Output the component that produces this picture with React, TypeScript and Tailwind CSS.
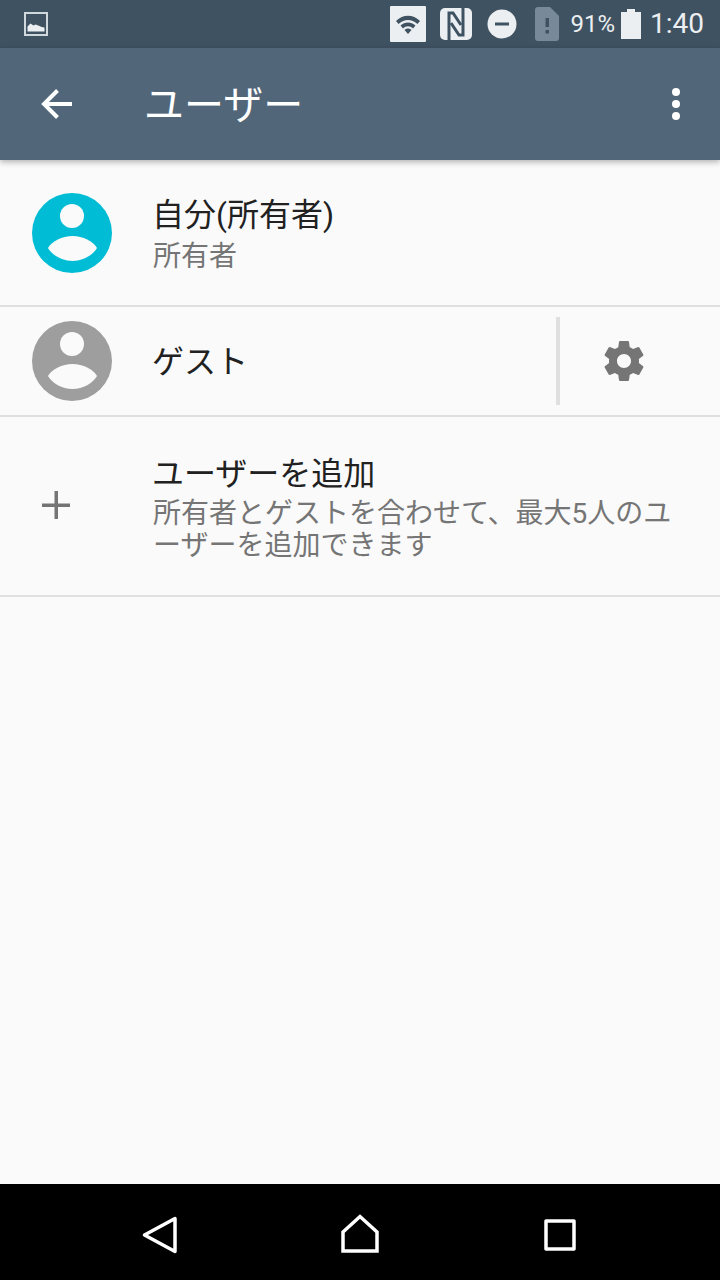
import React from "react";

const cjk = "font-['Roboto','Noto_Sans_CJK_JP',sans-serif]";

function Avatar({ color }: { color: string }) {
  return (
    <svg width="80" height="80" viewBox="0 0 80 80" className="shrink-0">
      <circle cx="40" cy="40" r="40" fill={color} />
      <circle cx="40" cy="23" r="12" fill="#fafafa" />
      <path d="M16 55 C20 48 30 43 40.500 43 C51 43 61 48 65 55 C61 62 51 68 40.500 68 C30 68 20 62 16 55 Z" fill="#fafafa" />
    </svg>
  );
}

function Divider() {
  return <div className="h-[2px] bg-[#e0e0e0]" />;
}

function StatusBar() {
  return (
    <div className="flex h-12 items-center bg-[#3f5262] pl-6 pr-4 text-[#eceff1]">
      <svg width="24" height="24" viewBox="0 0 24 24">
        <rect x="1" y="1" width="22" height="22" fill="none" stroke="#cfd8dc" strokeWidth="2" />
        <path d="M3.500 19.500v-5l3-3 3 2 2-1 4 1.500 2 1 3 .5v4z" fill="#eceff1" />
      </svg>
      <div className="ml-auto flex items-center">
        <svg width="36" height="36" viewBox="0 0 36 36">
          <rect width="36" height="36" rx="1" fill="#eceff1" />
          <path d="M6 15 C13 8 23 8 30 15 L27.500 18 C21.500 12.500 14.500 12.500 8.500 18 Z" fill="#3f5262" />
          <path d="M10.500 19.500 C15 15.500 21 15.500 25.500 19.500 L23 22.500 C20 19.500 16 19.500 13 22.500 Z" fill="#3f5262" />
          <path d="M14.500 24 C16.500 22 19.500 22 21.500 24 L18 28 Z" fill="#3f5262" />
        </svg>
        <svg width="32" height="32" viewBox="0 0 32 32" className="ml-[14px]">
          <rect width="32" height="32" rx="5" fill="#eceff1" />
          <path d="M9 32V5H13L21 17" fill="none" stroke="#3f5262" strokeWidth="3" />
          <path d="M23 0V27H19L11 15" fill="none" stroke="#3f5262" strokeWidth="3" />
        </svg>
        <svg width="30" height="30" viewBox="0 0 30 30" className="ml-[15px]">
          <circle cx="15" cy="15" r="14.500" fill="#eceff1" />
          <rect x="8" y="13.500" width="14" height="3" fill="#3f5262" />
        </svg>
        <svg width="24" height="34" viewBox="0 0 24 34" className="ml-[18px]">
          <path d="M3 0h12l9 9v22a3 3 0 0 1-3 3H3a3 3 0 0 1-3-3V3a3 3 0 0 1 3-3z" fill="#78899a" />
          <rect x="10.500" y="11" width="3.500" height="9" fill="#3f5262" />
          <rect x="10.500" y="23" width="3.500" height="3.500" fill="#3f5262" />
        </svg>
        <span className="ml-[11px] font-['Roboto',sans-serif] text-[24px] leading-none">91%</span>
        <svg width="20" height="30" viewBox="0 0 20 30" className="ml-[6px]">
          <path d="M6 0h8v3h6v27H0V3h6z" fill="#eceff1" />
        </svg>
        <span className="ml-[9px] font-['Roboto',sans-serif] text-[28px] leading-none">1:40</span>
      </div>
    </div>
  );
}

function AppBar() {
  return (
    <div className="relative z-10 flex h-28 items-center bg-[#526679] shadow-[0_2px_6px_rgba(0,0,0,0.3)]">
      <div className="flex w-28 justify-center">
        <svg width="32" height="32" viewBox="0 0 32 32" fill="none" stroke="#fff" strokeWidth="4">
          <path d="M32 16H5M17.500 2.500L4 16L17.500 29.500" />
        </svg>
      </div>
      <h1 className={`ml-[32px] pt-[4px] text-[40px] leading-none text-white ${cjk}`}>ユーザー</h1>
      <div className="ml-auto mr-[40px] flex flex-col gap-[4px]">
        <span className="h-2 w-2 rounded-full bg-white" />
        <span className="h-2 w-2 rounded-full bg-white" />
        <span className="h-2 w-2 rounded-full bg-white" />
      </div>
    </div>
  );
}

function NavBar() {
  return (
    <div className="flex h-24 items-center justify-center bg-black pt-[5px]">
      <div className="flex w-[200px] justify-center">
        <svg width="36" height="38" viewBox="0 0 36 38" fill="none" stroke="#fff" strokeWidth="3.500" strokeLinejoin="round">
          <path d="M33 2.500V35.500L2.500 19Z" />
        </svg>
      </div>
      <div className="-mt-[3px] flex w-[200px] justify-center">
        <svg width="38" height="39" viewBox="0 0 38 39" fill="none" stroke="#fff" strokeWidth="3.500">
          <path d="M2 37V18L19 2.500 36 18V37Z" />
        </svg>
      </div>
      <div className="flex w-[200px] justify-center">
        <svg width="32" height="32" viewBox="0 0 32 32" fill="none" stroke="#fff" strokeWidth="3.500" strokeLinejoin="round">
          <rect x="2" y="2" width="28" height="28" />
        </svg>
      </div>
    </div>
  );
}

export default function App() {
  return (
    <div className={`flex h-[1280px] w-[720px] flex-col overflow-hidden bg-[#fafafa] ${cjk}`}>
      <StatusBar />
      <AppBar />

      <div className="flex-1">
        {/* 自分 */}
        <div className="flex h-[145px] items-center pl-8 pt-[1px]">
          <Avatar color="#00bcd4" />
          <div className="ml-[40px] pt-[8px]">
            <div className="text-[32px] leading-[40px] text-[#212121]">自分(所有者)</div>
            <div className="pl-[1px] text-[28px] leading-[44px] text-[#757575]">所有者</div>
          </div>
        </div>
        <Divider />

        {/* ゲスト */}
        <div className="flex h-[108px] items-center pl-8">
          <Avatar color="#9e9e9e" />
          <div className="ml-[40px] pt-[2px] text-[32px] leading-[40px] text-[#212121]">ゲスト</div>
          <div className="ml-auto flex h-[88px] w-[164px] items-center border-l-4 border-[#e0e0e0] pl-[40px]">
            <svg width="48" height="48" viewBox="0 0 24 24" fill="#757575">
              <path d="M19.430 12.980c.040-.320.070-.640.070-.980s-.030-.660-.070-.980l2.110-1.650c.190-.150.240-.420.120-.640l-2-3.460c-.120-.220-.390-.300-.610-.220l-2.490 1c-.520-.400-1.080-.730-1.690-.980l-.380-2.650C14.460 2.180 14.250 2 14 2h-4c-.250 0-.460.180-.490.420l-.380 2.650c-.610.250-1.170.590-1.690.980l-2.490-1c-.230-.090-.490 0-.610.220l-2 3.460c-.130.220-.070.490.120.640l2.110 1.650c-.040.320-.070.650-.070.980s.030.660.070.980l-2.110 1.650c-.190.150-.240.420-.120.640l2 3.460c.120.220.390.300.610.220l2.490-1c.520.400 1.080.730 1.690.980l.380 2.650c.030.240.240.420.490.420h4c.250 0 .460-.180.490-.420l.380-2.650c.610-.250 1.170-.590 1.690-.980l2.490 1c.230.090.490 0 .610-.220l2-3.460c.120-.220.070-.490-.120-.640l-2.110-1.650zM12 15.500c-1.930 0-3.500-1.570-3.500-3.500s1.570-3.500 3.500-3.500 3.500 1.570 3.500 3.500-1.570 3.500-3.500 3.500z" />
            </svg>
          </div>
        </div>
        <Divider />

        {/* 追加 */}
        <div className="flex h-[178px] items-center">
          <div className="-mt-[2px] flex w-28 shrink-0 justify-center">
            <svg width="28" height="28" viewBox="0 0 28 28" fill="#757575">
              <path d="M12.500 0h3.500v12.500H28v3.500H16V28h-3.500V16H0v-3.500h12.500z" />
            </svg>
          </div>
          <div className="ml-[40px] mr-[48px] pt-[3px]">
            <div className="text-[32px] leading-[40px] text-[#212121]">ユーザーを追加</div>
            <div className="mt-[4px] pl-[1px] text-[28px] leading-[32px] text-[#757575]">所有者とゲストを合わせて、最大5人のユーザーを追加できます</div>
          </div>
        </div>
        <Divider />
      </div>

      <NavBar />
    </div>
  );
}
